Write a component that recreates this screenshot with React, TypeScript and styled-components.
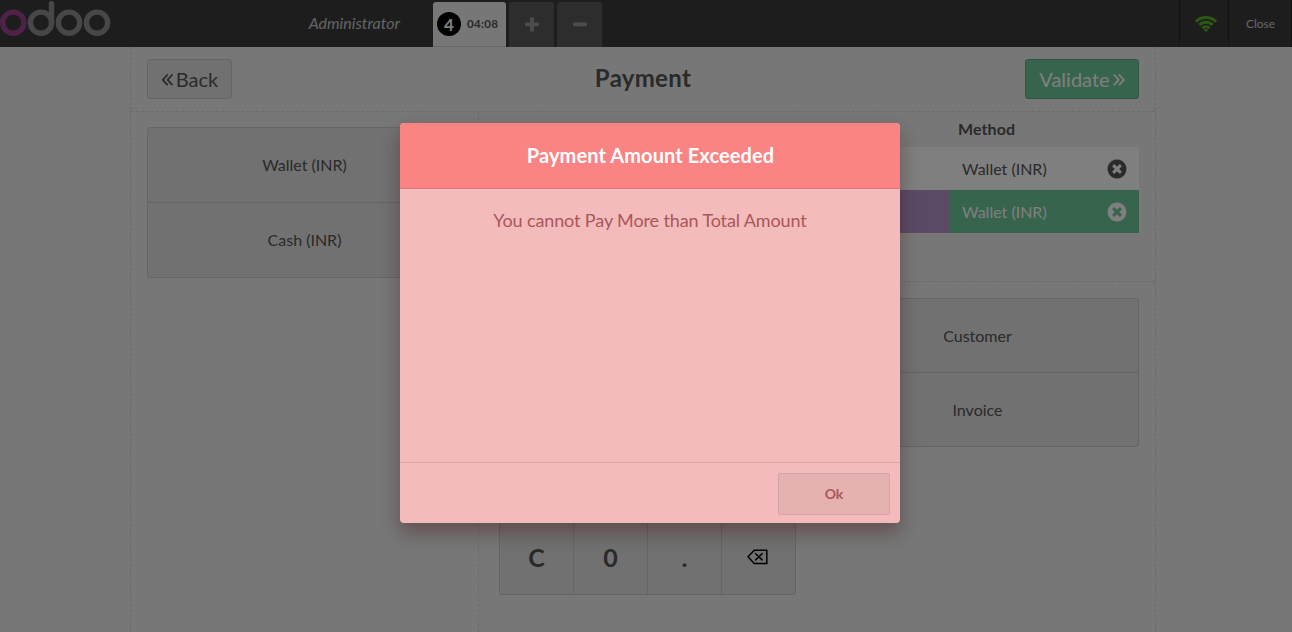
import React from "react";
import styled, { createGlobalStyle, css } from "styled-components";

const GlobalStyle = createGlobalStyle`
  *, *::before, *::after { box-sizing: border-box; }
  body {
    margin: 0;
    overflow: hidden;
    font-family: Lato, "Liberation Sans", sans-serif;
    font-size: 16px;
    color: #555;
    background: #eeeeee;
  }
  button { font: inherit; color: inherit; margin: 0; padding: 0; }
`;

const Page = styled.div`
  position: relative;
  height: 632px;
  display: flex;
  flex-direction: column;
`;

const TopBar = styled.header`
  height: 47px;
  flex: none;
  display: flex;
  background: #3a3a3a;
`;

const Branding = styled.div`
  width: 433px;
  display: flex;
  justify-content: space-between;
  padding-right: 33px;
`;

const LogoSvg = styled.svg`
  display: block;
`;

const UserName = styled.span`
  font-style: italic;
  line-height: 45px;
  color: #c9c9c9;
`;

const OrderTabs = styled.div`
  flex: 1;
  display: flex;
  gap: 3px;
  padding-top: 2px;
`;

const OrderTab = styled.div`
  width: 73px;
  display: flex;
  align-items: center;
  gap: 6px;
  padding-left: 4px;
  border-radius: 3px 3px 0 0;
  border-bottom: 1px solid #d0d0d0;
  background: #eeeeee;
  font-size: 11.5px;
  font-weight: bold;
  letter-spacing: 0.3px;
`;

const OrderNumber = styled.span`
  width: 24px;
  height: 24px;
  border-radius: 12px;
  background: #000;
  color: #fff;
  font-size: 17px;
  line-height: 25px;
  letter-spacing: 0;
  text-align: center;
`;

const OrderTime = styled.span`
  padding-bottom: 2px;
`;

const SquareTab = styled.button`
  width: 45px;
  display: flex;
  align-items: center;
  justify-content: center;
  padding-top: 1px;
  border: 0;
  border-radius: 3px 3px 0 0;
  background: #5a5a5a;
  color: #999;
`;

const StatusArea = styled.div`
  display: flex;
`;

const StatusItem = styled.div<{ $width: number; $shift?: number }>`
  width: ${(p) => p.$width}px;
  display: flex;
  align-items: center;
  justify-content: center;
  padding-left: ${(p) => p.$shift ?? 0}px;
  border-left: 1px solid #292929;
  font-size: 12px;
  color: #ccc;
  &:last-child { border-right: 1px solid #292929; }
`;

const dashed = "1px dashed #d6d6d6";

const Screen = styled.main`
  width: 1026px;
  flex: 1;
  margin-left: 130px;
  display: flex;
  flex-direction: column;
  border-left: ${dashed};
  border-right: ${dashed};
`;

const ScreenHeader = styled.div`
  height: 65px;
  display: flex;
  align-items: flex-start;
  justify-content: space-between;
  padding: 12px 16px 0;
  border-bottom: ${dashed};
`;

const Title = styled.h1`
  margin: 0;
  padding-left: 29px;
  font-size: 24px;
  line-height: 38px;
  letter-spacing: 0.3px;
`;

const NavButton = styled.button<{ $primary?: boolean }>`
  height: 40px;
  width: ${(p) => (p.$primary ? 114 : 85)}px;
  display: flex;
  align-items: center;
  justify-content: center;
  gap: 3px;
  border: 1px solid ${(p) => (p.$primary ? "#5aab84" : "#cacaca")};
  border-radius: 3px;
  background: ${(p) => (p.$primary ? "#6ec89b" : "#e2e2e2")};
  color: ${(p) => (p.$primary ? "#fff" : "#555")};
  font-size: 20px;
`;

const Columns = styled.div`
  flex: 1;
  display: flex;
`;

const MethodsColumn = styled.section`
  width: 348px;
  padding: 15px 16px 0;
  border-right: ${dashed};
`;

const ButtonStack = styled.div<{ $rowHeight: number }>`
  border: 1px solid #cacaca;
  border-radius: 3px;
  background: #e2e2e2;
  & > div { height: ${(p) => p.$rowHeight}px; }
  & > div:first-child { height: ${(p) => p.$rowHeight - 1}px; }
  & > div + div { border-top: 1px solid #cacaca; }
`;

const StackButton = styled.div`
  display: flex;
  align-items: center;
  justify-content: center;
  padding-bottom: 1px;
`;

const DetailsColumn = styled.section`
  flex: 1;
  display: flex;
  flex-direction: column;
`;

const Lines = styled.div`
  height: 170px;
  padding: 0 16px 0 20px;
  border-bottom: ${dashed};
`;

const LinesHeading = styled.div`
  height: 35px;
  padding-left: 459px;
  line-height: 33px;
  font-weight: bold;
  letter-spacing: 0.1px;
`;

const PaymentLine = styled.div<{ $selected?: boolean }>`
  height: 43px;
  display: flex;
  background: #fff;
  ${(p) =>
    p.$selected &&
    css`
      background: #6ec89b;
      color: #fff;
    `}
`;

const AmountCell = styled.div<{ $editing?: boolean }>`
  width: 450px;
  background: ${(p) => (p.$editing ? "#b495cb" : "transparent")};
`;

const MethodCell = styled.div`
  flex: 1;
  display: flex;
  align-items: center;
  justify-content: space-between;
  padding: 0 11px 0 13px;
`;

const Controls = styled.div`
  display: flex;
  gap: 20px;
  padding: 16px 16px 0 20px;
`;

const Numpad = styled.div`
  width: 297px;
  display: grid;
  grid-template-columns: repeat(4, 74px);
  grid-auto-rows: 74px;
  border: solid #cacaca;
  border-width: 1px 0 0 1px;
  border-radius: 4px;
  background: #e2e2e2;
`;

const Key = styled.div`
  display: flex;
  align-items: center;
  justify-content: center;
  padding-bottom: 1px;
  border: solid #cacaca;
  border-width: 0 1px 1px 0;
  font-size: 25px;
  font-weight: bold;
  &:last-child { border-bottom-right-radius: 4px; padding-right: 2px; }
`;

const OrderOptions = styled.div`
  flex: 1;
`;

const Overlay = styled.div`
  position: absolute;
  inset: 0;
  display: flex;
  justify-content: center;
  align-items: flex-start;
  padding: 123px 0 0 8px;
  background: rgba(0, 0, 0, 0.5);
`;

const Popup = styled.div`
  width: 500px;
  height: 400px;
  display: flex;
  flex-direction: column;
  border-radius: 4px;
  overflow: hidden;
  background: #f3bbbb;
  color: #a95759;
  text-align: center;
  box-shadow: 0 10px 20px rgba(60, 0, 0, 0.33);
`;

const PopupTitle = styled.h2`
  height: 66px;
  margin: 0;
  padding-left: 1px;
  border-bottom: 1px solid #e17676;
  background: #fa8383;
  color: #fff;
  font-size: 20px;
  line-height: 65px;
  letter-spacing: 0.1px;
`;

const PopupBody = styled.p`
  flex: 1;
  margin: 0;
  padding-top: 15px;
  font-size: 18px;
  line-height: 32px;
  letter-spacing: -0.12px;
`;

const PopupFooter = styled.div`
  height: 61px;
  display: flex;
  justify-content: flex-end;
  padding: 10px;
  border-top: 1px solid #dba8a8;
`;

const PopupButton = styled.button`
  width: 112px;
  height: 42px;
  padding-bottom: 2px;
  border: 1px solid #d6a5a5;
  border-radius: 2px;
  background: #e6b1b1;
  font-size: 14px;
  font-weight: bold;
`;

const Logo = () => (
  <LogoSvg width="112" height="40" fill="none" strokeWidth="5.4">
    <circle cx="13.3" cy="22.7" r="10.6" stroke="#9d4490" />
    <g stroke="#8f8f8f">
      <circle cx="41" cy="22.7" r="10.6" />
      <circle cx="69" cy="22.7" r="10.6" />
      <circle cx="97" cy="22.7" r="10.6" />
      <path d="M51.5 23V3.7" strokeLinecap="round" />
    </g>
  </LogoSvg>
);

const Glyph = ({ d, size }: { d: string; size: number }) => (
  <svg width={size} height={size} viewBox="0 0 1792 1792" fill="currentColor">
    <path d={d} />
  </svg>
);

const PLUS =
  "M1600 736v192q0 40-28 68t-68 28h-416v416q0 40-28 68t-68 28h-192q-40 0-68-28t-28-68v-416h-416q-40 0-68-28t-28-68v-192q0-40 28-68t68-28h416v-416q0-40 28-68t68-28h192q40 0 68 28t28 68v416h416q40 0 68 28t28 68z";
const MINUS =
  "M1600 736v192q0 40-28 68t-68 28h-1216q-40 0-68-28t-28-68v-192q0-40 28-68t68-28h1216q40 0 68 28t28 68z";
const TIMES_CIRCLE =
  "M1277 1122q0-26-19-45l-181-181 181-181q19-19 19-45 0-27-19-46l-90-90q-19-19-46-19-26 0-45 19l-181 181-181-181q-19-19-45-19-27 0-46 19l-90 90q-19 19-19 46 0 26 19 45l181 181-181 181q-19 19-19 45 0 27 19 46l90 90q19 19 46 19 26 0 45-19l181-181 181 181q19 19 45 19 27 0 46-19l90-90q19-19 19-46zm387-226q0 209-103 385.5t-279.5 279.5-385.5 103-385.5-103-279.5-279.5-103-385.5 103-385.5 279.5-279.5 385.5-103 385.5 103 279.5 279.5 103 385.5z";

const Chevrons = ({ right }: { right?: boolean }) => (
  <svg width="12" height="14" viewBox="0 0 12 14" fill="none" stroke="currentColor" strokeWidth="1.8" strokeLinecap="round" strokeLinejoin="round">
    <path
      d={right ? "M1.4 3 5.8 7.8 1.4 12.6M6.4 3 10.8 7.8 6.4 12.6" : "M6.2 3 1.8 7.8 6.2 12.6M11 3 6.6 7.8 11 12.6"}
    />
  </svg>
);

const Wifi = () => (
  <svg width="22" height="16" viewBox="0 0 22 16" fill="none" stroke="#5ab128" strokeWidth="3">
    <path d="M.9 5.6a14.3 14.3 0 0 1 20.2 0M4.3 8.9a9.6 9.6 0 0 1 13.4 0M7.5 12.1a5 5 0 0 1 7 0" />
    <path d="M11 16 8.9 13.9a3 3 0 0 1 4.2 0z" fill="#5ab128" stroke="none" />
  </svg>
);

const Backspace = () => (
  <svg width="21" height="16" viewBox="0 0 21 16" fill="none" stroke="#000" strokeWidth="1.5">
    <path d="M7.3 1.2H19.8V14.4H7.3L1 7.8z" />
    <path d="m8.2 4.2 7.4 7.2M15.6 4.2 8.2 11.4" />
  </svg>
);

const UPPER_KEYS = Array.from({ length: 12 }, (_, i) => i);

export default function App() {
  return (
    <>
      <GlobalStyle />
      <Page>
        <TopBar>
          <Branding>
            <Logo />
            <UserName>Administrator</UserName>
          </Branding>
          <OrderTabs>
            <OrderTab>
              <OrderNumber>4</OrderNumber>
              <OrderTime>04:08</OrderTime>
            </OrderTab>
            <SquareTab><Glyph d={PLUS} size={18} /></SquareTab>
            <SquareTab><Glyph d={MINUS} size={18} /></SquareTab>
          </OrderTabs>
          <StatusArea>
            <StatusItem $width={49} $shift={4}><Wifi /></StatusItem>
            <StatusItem $width={64} $shift={1}>Close</StatusItem>
          </StatusArea>
        </TopBar>
        <Screen>
          <ScreenHeader>
            <NavButton><Chevrons />Back</NavButton>
            <Title>Payment</Title>
            <NavButton $primary>Validate<Chevrons right /></NavButton>
          </ScreenHeader>
          <Columns>
            <MethodsColumn>
              <ButtonStack $rowHeight={75}>
                <StackButton>Wallet (INR)</StackButton>
                <StackButton>Cash (INR)</StackButton>
              </ButtonStack>
            </MethodsColumn>
            <DetailsColumn>
              <Lines>
                <LinesHeading>Method</LinesHeading>
                <PaymentLine>
                  <AmountCell />
                  <MethodCell>Wallet (INR)<Glyph d={TIMES_CIRCLE} size={22} /></MethodCell>
                </PaymentLine>
                <PaymentLine $selected>
                  <AmountCell $editing />
                  <MethodCell>Wallet (INR)<Glyph d={TIMES_CIRCLE} size={22} /></MethodCell>
                </PaymentLine>
              </Lines>
              <Controls>
                <Numpad>
                  {UPPER_KEYS.map((key) => <Key key={key} />)}
                  <Key>C</Key>
                  <Key>0</Key>
                  <Key>.</Key>
                  <Key><Backspace /></Key>
                </Numpad>
                <OrderOptions>
                  <ButtonStack $rowHeight={74}>
                    <StackButton>Customer</StackButton>
                    <StackButton>Invoice</StackButton>
                  </ButtonStack>
                </OrderOptions>
              </Controls>
            </DetailsColumn>
          </Columns>
        </Screen>
        <Overlay>
          <Popup>
            <PopupTitle>Payment Amount Exceeded</PopupTitle>
            <PopupBody>You cannot Pay More than Total Amount</PopupBody>
            <PopupFooter>
              <PopupButton>Ok</PopupButton>
            </PopupFooter>
          </Popup>
        </Overlay>
      </Page>
    </>
  );
}
